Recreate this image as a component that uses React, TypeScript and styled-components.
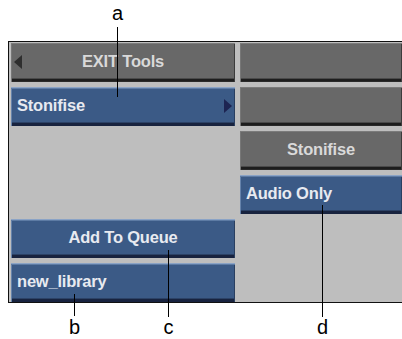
import React from "react";
import styled, { createGlobalStyle, css } from "styled-components";

const GlobalStyle = createGlobalStyle`
  html, body {
    margin: 0;
    padding: 0;
    background: #ffffff;
    font-family: "Liberation Sans", Arial, sans-serif;
  }
`;

type Tone = "gray" | "blue";

const grayTone = css`
  background: #686868;
  color: #d9d9d9;
  box-shadow:
    inset 0 1px 0 #7b7b7b,
    inset 1px 0 0 #777777,
    inset -1px 0 0 #3c3c3c,
    inset 0 -1px 0 #2a2a2a,
    inset 0 -3px 0 #1d1d1d,
    inset 0 -4px 0 #4a4a4a;
`;

const blueTone = css`
  background: #3b5a86;
  color: #e8eaf0;
  box-shadow:
    inset 0 1px 0 #8aa3c6,
    inset 0 2px 0 #5d7ba4,
    inset 1px 0 0 #6683ab,
    inset -1px 0 0 #2a3f60,
    inset 0 -3px 0 #18233f,
    inset 0 -4px 0 #2c4266;
`;

const Figure = styled.div`
  position: relative;
  width: 402px;
  height: 339px;
  padding-top: 41px;
  box-sizing: border-box;
  overflow: hidden;
`;

const Panel = styled.div`
  margin-left: 8px;
  border: 1px solid #111111;
  border-right: none;
  background: #bebebe;
  padding: 1px 0 0 2px;
  display: grid;
  grid-template-columns: 224px 1fr;
  grid-auto-rows: 39px;
  gap: 5px;
`;

const Button = styled.div<{ $tone: Tone; $align?: "left" | "center" }>`
  position: relative;
  display: flex;
  align-items: center;
  justify-content: ${(p) => (p.$align === "left" ? "flex-start" : "center")};
  padding: 0 0 2px ${(p) => (p.$align === "left" ? "6px" : "0")};
  font-size: 16.5px;
  font-weight: bold;
  letter-spacing: -0.2px;
  white-space: nowrap;
  ${(p) => (p.$tone === "gray" ? grayTone : blueTone)}
`;

const Empty = styled.div``;

const Arrow = styled.span<{ $dir: "left" | "right" }>`
  position: absolute;
  top: 50%;
  margin-top: -8px;
  width: 0;
  height: 0;
  border-top: 7px solid transparent;
  border-bottom: 7px solid transparent;
  ${(p) =>
    p.$dir === "left"
      ? css`
          left: 3px;
          border-right: 8px solid #2e2e2e;
        `
      : css`
          right: 3px;
          border-left: 8px solid #1d2452;
        `}
`;

const Leader = styled.div`
  position: absolute;
  width: 1px;
  background: #000000;
`;

const Label = styled.span`
  position: absolute;
  width: 20px;
  margin-left: -10px;
  text-align: center;
  font-family: "Liberation Sans", Arial, sans-serif;
  font-size: 20px;
  line-height: 20px;
  color: #000000;
`;

type CalloutProps = { letter: string; x: number; from: number; to: number; labelTop: number };

const Callout = ({ letter, x, from, to, labelTop }: CalloutProps) => (
  <>
    <Leader style={{ left: x, top: from, height: to - from }} />
    <Label style={{ left: x + 0.5, top: labelTop }}>{letter}</Label>
  </>
);

const App = () => {
  return (
    <>
      <GlobalStyle />
      <Figure>
        <Panel>
          <Button $tone="gray">
            <Arrow $dir="left" />
            EXIT Tools
          </Button>
          <Button $tone="gray" />

          <Button $tone="blue" $align="left">
            Stonifise
            <Arrow $dir="right" />
          </Button>
          <Button $tone="gray" />

          <Empty />
          <Button $tone="gray">Stonifise</Button>

          <Empty />
          <Button $tone="blue" $align="left">Audio Only</Button>

          <Button $tone="blue">Add To Queue</Button>
          <Empty />

          <Button $tone="blue" $align="left">new_library</Button>
          <Empty />
        </Panel>

        <Callout letter="a" x={117} from={27} to={97} labelTop={3} />
        <Callout letter="b" x={74} from={294} to={316} labelTop={317} />
        <Callout letter="c" x={168} from={250} to={317} labelTop={317} />
        <Callout letter="d" x={322} from={205} to={317} labelTop={317} />
      </Figure>
    </>
  );
};

export default App;
